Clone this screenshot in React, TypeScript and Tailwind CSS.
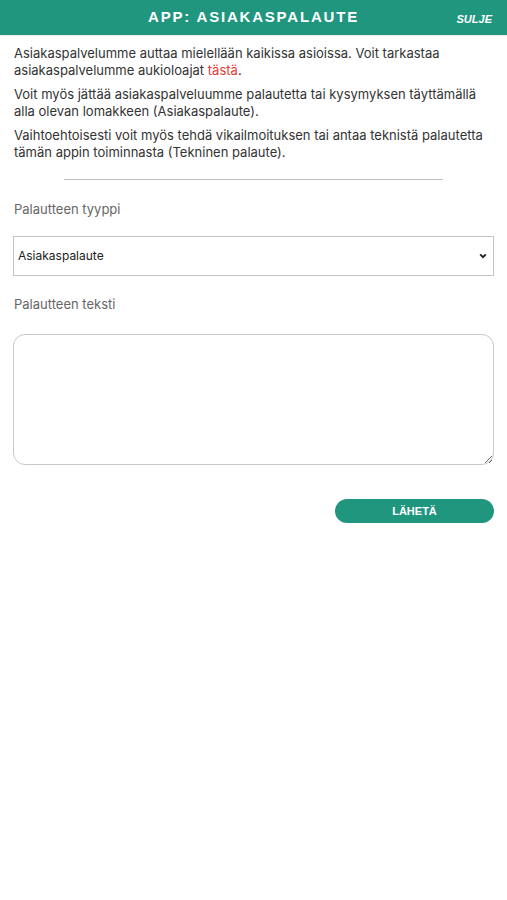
import { useState } from "react";

export default function App() {
  const [type, setType] = useState("Asiakaspalaute");
  const [text, setText] = useState("");

  return (
    <div className="min-h-[900px] bg-white font-['Inter',sans-serif] text-[#333]">
      <div className="relative flex h-[35px] items-center justify-center bg-[#20967f] shadow-[0_1px_1px_rgba(0,0,0,0.08)]">
        <h1 className="font-['Liberation_Sans',sans-serif] text-[15px] font-bold tracking-[0.12em] text-white">
          APP: ASIAKASPALAUTE
        </h1>
        <button className="absolute right-[15px] top-[11px] font-['Liberation_Sans',sans-serif] text-[11px] font-bold italic text-white">
          SULJE
        </button>
      </div>

      <div className="px-[14px] pt-[10px] text-[13px] leading-[17px]">
        <p className="mb-[7px]">
          Asiakaspalvelumme auttaa mielellään kaikissa asioissa. Voit tarkastaa asiakaspalvelumme aukioloajat{" "}
          <a className="text-[#e53935]">tästä</a>.
        </p>
        <p className="mb-[7px]">
          Voit myös jättää asiakaspalveluumme palautetta tai kysymyksen täyttämällä alla olevan lomakkeen (Asiakaspalaute).
        </p>
        <p>
          Vaihtoehtoisesti voit myös tehdä vikailmoituksen tai antaa teknistä palautetta tämän appin toiminnasta (Tekninen palaute).
        </p>
      </div>

      <div className="mx-[64px] mt-[18px] h-px bg-[#bdbdbd]" />

      <div className="px-[13px]">
        <label className="mt-[20px] block pl-px text-[13px] text-[#666]">Palautteen tyyppi</label>
        <div className="relative mt-[16px]">
          <select
            value={type}
            onChange={(e) => setType(e.target.value)}
            className="h-[40px] w-full appearance-none border border-[#c4c4c4] bg-white pl-[4px] text-[12px] text-[#222] outline-none"
          >
            <option>Asiakaspalaute</option>
            <option>Tekninen palaute</option>
          </select>
          <svg
            className="pointer-events-none absolute right-[7px] top-[17px]"
            width="8"
            height="6"
            viewBox="0 0 8 6"
          >
            <path d="M1.2 1.4 L4 4.2 L6.8 1.4" fill="none" stroke="#222" strokeWidth="1.9" />
          </svg>
        </div>

        <label className="mt-[19px] block pl-px text-[13px] text-[#666]">Palautteen teksti</label>
        <textarea
          value={text}
          onChange={(e) => setText(e.target.value)}
          className="mt-[20px] block h-[131px] w-full rounded-[12px] border border-[#c8c8c8] p-2 text-[13px] outline-none"
        />

        <div className="mt-[34px] flex justify-end">
          <button className="h-[24px] w-[159px] rounded-full bg-[#20967f] font-['Liberation_Sans',sans-serif] text-[11px] font-bold text-white">
            LÄHETÄ
          </button>
        </div>
      </div>
    </div>
  );
}
